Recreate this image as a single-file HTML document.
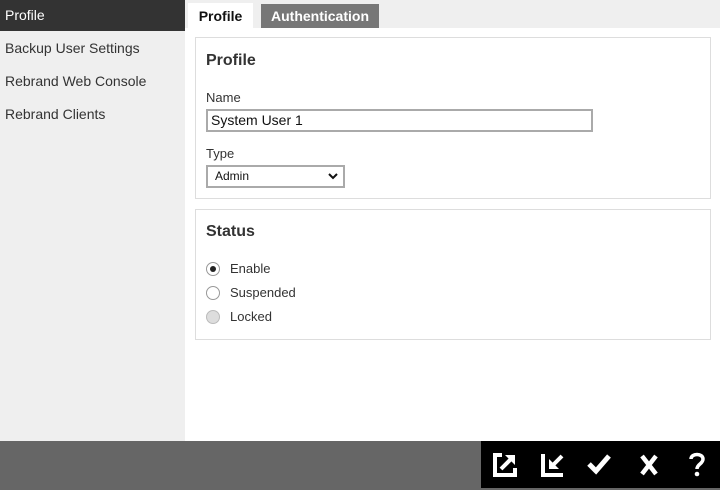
<!DOCTYPE html>
<html><head><style>
*{margin:0;padding:0;box-sizing:border-box}
body{width:720px;height:490px;position:relative;font-family:"Liberation Sans",Arial,sans-serif;background:#fff;overflow:hidden}
.side{position:absolute;left:0;top:0;width:185px;height:441px;background:#efefef}
.side div{height:33px;line-height:35px;padding-left:5px;font-size:14px;color:#333}
.side .act{background:#333;color:#fff;height:31px;line-height:30px}
.topstrip{position:absolute;left:185px;top:0;width:535px;height:28px;background:#efefef}
.tab{position:absolute;top:4px;height:24px;line-height:24px;font-size:14px;font-weight:bold;text-align:center}
.box{position:absolute;left:195px;width:516px;border:1px solid #ddd;background:#fff}
h2{position:absolute;left:10px;font-size:16px;color:#333;font-weight:bold}
.lbl{position:absolute;left:10px;font-size:13px;color:#333}
.radio{position:absolute;left:10px;width:14px;height:14px;border-radius:50%;border:1px solid #999;background:#fff}
.bar{position:absolute;left:0;top:441px;width:720px;height:49px;background:#666}
.blk{position:absolute;left:481px;top:441px;width:239px;height:47px;background:#000}
</style></head><body>
<div class="side">
<div class="act">Profile</div>
<div>Backup User Settings</div>
<div>Rebrand Web Console</div>
<div>Rebrand Clients</div>
</div>
<div class="topstrip"></div>
<div class="tab" style="left:188px;width:65px;background:#fff;color:#111;top:3px;height:25px;line-height:27px">Profile</div>
<div class="tab" style="left:261px;width:118px;background:#777;color:#fff">Authentication</div>

<div class="box" style="top:37px;height:162px">
<h2 style="top:14px">Profile</h2>
<div class="lbl" style="top:52px">Name</div>
<div style="position:absolute;left:10px;top:71px;width:387px;height:23px;border:2px solid #aaa;font-size:14px;line-height:19px;padding-left:3px;color:#111">System User 1</div>
<div class="lbl" style="top:108px">Type</div>
<div style="position:absolute;left:10px;top:127px;width:139px;height:23px;border:2px solid #aaa;font-size:12px;line-height:19px;padding-left:7px;color:#111">Admin
<svg style="position:absolute;right:5px;top:6px" width="10" height="7" viewBox="0 0 10 7"><path d="M1 1L5 5L9 1" stroke="#111" stroke-width="2" fill="none"/></svg></div>
</div>

<div class="box" style="top:209px;height:131px">
<h2 style="top:13px">Status</h2>
<div class="radio" style="top:52px"><div style="width:6px;height:6px;background:#222;border-radius:50%;margin:3px"></div></div>
<div class="lbl" style="left:34px;top:51px">Enable</div>
<div class="radio" style="top:76px"></div>
<div class="lbl" style="left:34px;top:75px">Suspended</div>
<div class="radio" style="top:100px;background:#ddd;border-color:#bbb"></div>
<div class="lbl" style="left:34px;top:99px">Locked</div>
</div>

<div class="bar"></div>
<div class="blk">
<svg width="239" height="47" viewBox="0 0 239 47">
<g stroke="#fff" stroke-width="4" fill="none">
<path d="M21 14H14V34H34V27"/><path d="M20 28L31 17"/>
<path d="M62 13V34H82"/><path d="M81 15L71 25"/>
<path d="M108 23L115 30L128 15" stroke-width="5"/>
<path d="M161 15L175 33M175 15L161 33" stroke-width="4.5"/>
<path d="M210 18C210 12 222 12 222 18C222 23 216 23 216 28" stroke-width="3.5"/>
</g>
<path d="M24 14H34V24Z" fill="#fff"/>
<path d="M68 18V28H78Z" fill="#fff"/>
<circle cx="216" cy="33" r="2.3" fill="#fff"/>
</svg>
</div>
</body></html>
